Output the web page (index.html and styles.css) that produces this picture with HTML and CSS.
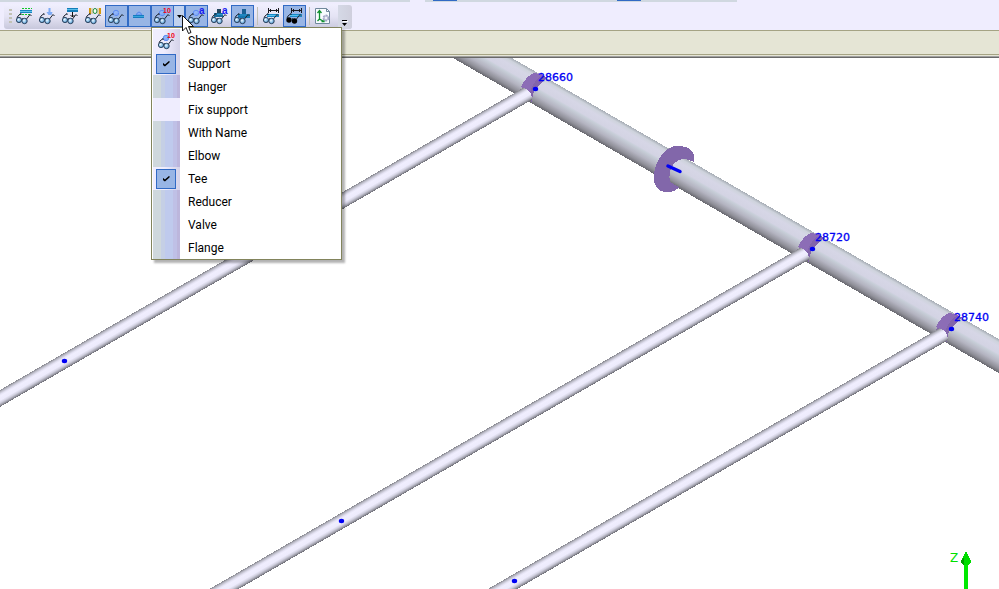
FILE: index.html
```html
<!DOCTYPE html>
<html lang="en">
<head>
<meta charset="utf-8">
<title>Piping model view</title>
<link rel="stylesheet" href="styles.css">
</head>
<body>
<svg class="defs" aria-hidden="true">
  <defs>
    <radialGradient id="lens" cx=".4" cy=".4" r=".7"><stop offset="0" stop-color="#f0faff"/><stop offset=".5" stop-color="#8fc4ec"/><stop offset="1" stop-color="#3f7cb0"/></radialGradient>
    <g id="arms">
      <path d="M1 10L2 8L5 5.500V7M6 11L7 10.500M10.500 11L14 6.500L15.500 8" fill="none" stroke="#1c2430"/>
    </g>
    <g id="glasses">
      <use href="#arms"/>
      <circle cx="3" cy="12" r="2.600" fill="url(#lens)" stroke="#2c4460"/>
      <circle cx="8.500" cy="13" r="2.700" fill="url(#lens)" stroke="#2c4460"/>
    </g>
    <g id="node">
      <circle cx="8" cy="5" r="2.700" fill="#8fb4f8" stroke="#5f8cf2"/>
      <path d="M6 8L11 4" stroke="#7ba4f8"/>
    </g>
    <g id="tee"><path d="M4 6h12v4H4z" fill="#1478b4"/><path d="M8 1h4v5H8z" fill="#1a5f94"/><path d="M4 7h11" stroke="#2c94cc"/></g>
    <g id="dimension"><path d="M5.500 0v5M15.500 0v5M6 2.500h9M7.500 1v3M13.500 1v3" stroke="#18181c" fill="none"/><path d="M4 6h12v3H4z" fill="#1688c8"/><path d="M4 7.500h12" stroke="#58c0ec"/></g>
  </defs>
</svg>

<header class="dock">
  <div class="upper" aria-hidden="true"><i class="edge first"></i><i class="edge second"><b></b><b></b></i></div>
  <div class="toolbar" role="toolbar" aria-label="View">
    <i class="grip"></i>
    <button class="tool" aria-label="Show insulation"><svg viewBox="0 0 16 16"><path d="M6 .5h10M3 6.500h11" stroke="#10c828" stroke-dasharray="2 1"/><path d="M4 2h12v3H4z" fill="#1585bd"/><path d="M4 3.500h12" stroke="#64c4ee"/><use href="#glasses"/></svg></button>
    <button class="tool" aria-label="Show loads"><svg viewBox="0 0 16 16"><path d="M9.500 0h2v4h2l-1 3h-3l-2-3h2z" fill="#7fabf5"/><use href="#glasses"/></svg></button>
    <button class="tool" aria-label="Show supports"><svg viewBox="0 0 16 16"><path d="M5 0h11v4H5z" fill="#137db8"/><path d="M5 1.500h11" stroke="#57bce9"/><path d="M10.500 4v5M8.500 7l2 2 2-2" stroke="#111" fill="none"/><use href="#glasses"/></svg></button>
    <button class="tool" aria-label="Show springs"><svg viewBox="0 0 16 16"><path d="M4 0h2v6H4zM14 0h2v6h-2z" fill="#d49a10"/><ellipse cx="10" cy="3" rx="2" ry="2.500" fill="#f5fff5" stroke="#148434"/><path d="M7 0v6M13 0v6" stroke="#c69a26" stroke-width=".6"/><use href="#glasses"/></svg></button>
    <button class="tool on" aria-pressed="true" aria-label="Show nodes"><svg viewBox="0 0 16 16"><use href="#node"/><use href="#glasses"/></svg></button>
    <button class="tool on" aria-pressed="true" aria-label="Show centre line"><svg viewBox="0 0 16 16"><path d="M5 7q3-6 6 0z" fill="#86aef5" stroke="#5687e8"/><path d="M2 7h11v3H2z" fill="#167cc0"/><path d="M2 8.500h11" stroke="#38a5dc"/></svg></button>
    <div class="split">
      <button class="tool on" aria-pressed="true" aria-label="Show node numbers"><svg viewBox="0 0 16 16"><use href="#node"/><use href="#glasses"/><text class="ten" x="9" y="5">10</text></svg></button>
      <button class="arrow" aria-expanded="true" aria-label="Node number options"><svg viewBox="0 0 5 3"><path d="M0 0h5L2.500 3z"/></svg></button>
      <div class="menu" role="group" aria-label="Node number options">
        <button class="item"><span class="mark"><svg viewBox="0 0 16 16"><use href="#node"/><use href="#glasses"/><text class="ten" x="9" y="5">10</text></svg></span><span>Show Node N<u>u</u>mbers</span></button>
        <label class="item"><span class="mark"><input type="checkbox" checked></span><span>Support</span></label>
        <label class="item"><span class="mark banded"><input type="checkbox"></span><span>Hanger</span></label>
        <label class="item"><span class="mark pale"><input type="checkbox"></span><span>Fix support</span></label>
        <label class="item"><span class="mark banded"><input type="checkbox"></span><span>With Name</span></label>
        <label class="item"><span class="mark banded"><input type="checkbox"></span><span>Elbow</span></label>
        <label class="item"><span class="mark"><input type="checkbox" checked></span><span>Tee</span></label>
        <label class="item"><span class="mark banded"><input type="checkbox"></span><span>Reducer</span></label>
        <label class="item"><span class="mark banded"><input type="checkbox"></span><span>Valve</span></label>
        <label class="item"><span class="mark banded"><input type="checkbox"></span><span>Flange</span></label>
      </div>
      <svg class="pointer" viewBox="0 0 12 20" aria-hidden="true"><path d="M.5 .5V16L4 12.500L6.500 18.500L9 17.500L6.500 11.500H11.500Z" fill="#fff" stroke="#111"/></svg>
    </div>
    <button class="tool on" aria-pressed="true" aria-label="Show node names"><svg viewBox="0 0 16 16"><use href="#node"/><use href="#glasses"/><text class="letter" x="11" y="6">a</text></svg></button>
    <button class="tool" aria-label="Show element names"><svg viewBox="0 0 16 16"><path d="M3 5h9v4H3z" fill="#176f9f"/><path d="M6 1h4v4H6z" fill="#24475f"/><path d="M3 6.500h9" stroke="#2c94cc"/><use href="#glasses"/><text class="letter" x="11" y="6">a</text></svg></button>
    <button class="tool on" aria-pressed="true" aria-label="Show elements"><svg viewBox="0 0 16 16"><use href="#tee"/><use href="#glasses"/></svg></button>
    <i class="rule"></i>
    <button class="tool" aria-label="Show dimensions"><svg viewBox="0 0 16 16"><use href="#dimension"/><use href="#glasses"/></svg></button>
    <button class="tool on" aria-pressed="true" aria-label="Show all dimensions"><svg viewBox="0 0 16 16"><use href="#dimension"/><use href="#arms"/><circle cx="3" cy="12" r="2.700"/><circle cx="8.500" cy="13" r="2.700"/></svg></button>
    <i class="rule"></i>
    <button class="tool" aria-label="View settings"><svg viewBox="0 0 16 16"><path d="M.5 .5h11l3 3v12H.5z" fill="#f8fcff" stroke="#70889c"/><path d="M11.500 .5v3h3" fill="none" stroke="#70889c"/><path d="M4.500 3v8L8 13M2.500 5l2-2.500 2 2.500M6.500 13.500H9V11M4.500 11L2.500 13" fill="none" stroke="#109030" stroke-width="1.300"/><circle cx="11" cy="10" r="2.700" fill="#c4c8de" stroke="#a2a6c4" stroke-width="1.500" stroke-dasharray="2 1"/><circle cx="11" cy="10" r="1" fill="#fff"/></svg></button>
    <button class="more" aria-label="Toolbar options"><svg viewBox="0 0 6 6"><path d="M1 1.500h5" stroke="#fff"/><path d="M0 0h5v1H0zM0 3h5L2.500 6z"/></svg></button>
  </div>
</header>
<div class="band"></div>

<main class="viewport">
  <svg class="model" viewBox="0 58 999 531" preserveAspectRatio="xMinYMin slice" role="img" aria-label="Pipe model">
    <defs>
      <linearGradient id="main-pipe" x1="0" y1="0" x2="0" y2="1">
        <stop offset="0" stop-color="#a6acb4"/><stop offset=".1" stop-color="#ced3dc"/><stop offset=".22" stop-color="#d6d6e6"/><stop offset=".44" stop-color="#d3d3e3"/><stop offset=".5" stop-color="#c7ced8"/><stop offset=".7" stop-color="#b4b4c1"/><stop offset=".88" stop-color="#909099"/><stop offset="1" stop-color="#696970"/>
      </linearGradient>
      <linearGradient id="branch-pipe" x1="0" y1="0" x2="0" y2="1">
        <stop offset="0" stop-color="#85858d"/><stop offset=".12" stop-color="#bcbcc8"/><stop offset=".26" stop-color="#e4e2f3"/><stop offset=".36" stop-color="#f0eefe"/><stop offset=".62" stop-color="#edebfc"/><stop offset=".76" stop-color="#d2d1e0"/><stop offset=".88" stop-color="#a6a6b2"/><stop offset="1" stop-color="#6c6c74"/>
      </linearGradient>
      <g id="collar">
        <path d="M-12 9Q-13 2-6-7Q1-15 10-10L14-9L5 0Q-1 6-1 17L-3 14Z" fill="#8265aa"/>
        <path d="M-12 1Q-7-10 1-13L11-11Q1-7-3 6Z" fill="#8c6db6"/>
      </g>
      <ellipse id="dot" rx="2.700" ry="2.200" fill="#0000f4"/>
    </defs>
    <g shape-rendering="crispEdges">
      <g transform="translate(482.500 58) rotate(30)"><rect x="-60" y="-14.700" width="720" height="29.400" fill="url(#main-pipe)"/></g>
      <use href="#collar" x="533" y="86"/><use href="#collar" x="810" y="246"/><use href="#collar" x="948" y="326"/>
      <g transform="translate(529 93) rotate(-30)"><path d="M-640-7.300H-2Q4 0-1 7.300H-640Z" fill="url(#branch-pipe)"/></g>
      <g transform="translate(806 253) rotate(-30)"><path d="M-720-7.300H-2Q4 0-1 7.300H-720Z" fill="url(#branch-pipe)"/></g>
      <g transform="translate(945 333.500) rotate(-30)"><path d="M-620-7.300H-2Q4 0-1 7.300H-620Z" fill="url(#branch-pipe)"/></g>
      <path d="M694 162Q696 151 686 147L677 145.500Q666 147 659 159Q653 169 654 181Q656 190 664 192H671Q677 190 679 187L670 182Q668 172 673 165Q679 158 686 159Z" fill="#8267aa"/>
      <path d="M964 562h4v27h-4z" fill="#00e800"/><path d="M966 551L971 561V563L968 565H964L961 563V561Z" fill="#00dc00"/><path d="M964 557L961 561V563L964 565Z" fill="#00a000"/>
    </g>
    <path d="M668 166L680 171.500" stroke="#0000f4" stroke-width="3.500" stroke-linecap="round"/>
    <use href="#dot" x="535.500" y="89"/><use href="#dot" x="812.500" y="249"/><use href="#dot" x="951.500" y="329"/>
    <use href="#dot" x="64.500" y="361"/><use href="#dot" x="341.500" y="521"/><use href="#dot" x="514.500" y="581"/>
    <g class="numbers"><text x="538" y="81">28660</text><text x="815" y="241">28720</text><text x="954" y="321">28740</text></g>
    <text class="axis" x="950" y="562">Z</text>
  </svg>
</main>
</body>
</html>
```
FILE: styles.css
```css
* { box-sizing: border-box; }

html, body { height: 100%; }

body {
  margin: 0;
  display: flex;
  flex-direction: column;
  overflow: hidden;
  background: #fff;
  color: #000;
  font: 12px/16px Roboto, "Open Sans", sans-serif;
}

button {
  margin: 0;
  padding: 0;
  border: 0;
  background: none;
  color: inherit;
  font: inherit;
}

svg { display: block; }

.defs { position: absolute; width: 0; height: 0; }

.dock {
  flex: none;
  background: #efedfe;
  border-bottom: 1px solid #a5a384;
}

.upper { display: flex; height: 2px; gap: 15px; }
.edge { background: #d0d8e0; }
.edge.first { width: 41%; }
.edge.second {
  width: 312px;
  display: flex;
  align-items: flex-start;
  gap: 160px;
  padding-left: 8px;
}
.edge b { width: 24px; height: 1px; background: #316ac5; }

.toolbar {
  display: flex;
  align-items: flex-start;
  width: max-content;
  height: 25px;
  margin: 2px 0 1px 4px;
  padding-top: 1px;
  border-radius: 3px;
  background: linear-gradient(#f0effe, #e4e3f4 50%, #c8c8dc);
}

.grip {
  width: 3px;
  height: 14px;
  margin: 4px 1px 0 5px;
  background: repeating-linear-gradient(#c2c2b4 0 2px, transparent 2px 4px);
}

.tool {
  display: flex;
  align-items: center;
  justify-content: center;
  width: 23px;
  height: 22px;
  padding-right: 1px;
}
.tool svg, .mark svg { width: 16px; height: 16px; overflow: visible; }
.on { background: #98b5e5; border: 1px solid #316ac5; }

.ten { fill: #f00018; font: bold 7px "Liberation Sans", sans-serif; }
.letter { fill: #1818f0; font: bold 10px "Liberation Sans", sans-serif; }

.rule {
  width: 1px;
  height: 18px;
  margin: 2px 2px 0 3px;
  background: #c2c2b8;
}

.split { position: relative; display: flex; }

.arrow {
  display: flex;
  align-items: center;
  justify-content: center;
  width: 11px;
  background: #c1d2ee;
  border: 1px solid #316ac5;
  border-left: 0;
}
.arrow svg { width: 5px; height: 3px; }

.more {
  display: flex;
  align-items: flex-end;
  justify-content: center;
  width: 14px;
  height: 24px;
  margin-left: 3px;
  padding-bottom: 3px;
  border-radius: 0 3px 3px 0;
  background: linear-gradient(90deg, #d5d9e6, #cfcfdd);
}
.more svg { width: 6px; height: 6px; }

.menu {
  position: absolute;
  z-index: 2;
  top: 22px;
  left: 0;
  width: 191px;
  padding: 1px 1px 0;
  background: #fff;
  border: 1px solid #82845c;
  box-shadow: 3px 3px 2px rgba(0, 0, 0, .3);
}

.item {
  display: flex;
  align-items: center;
  gap: 8px;
  width: 100%;
  height: 23px;
  text-align: left;
  white-space: nowrap;
}

.mark {
  display: flex;
  align-items: center;
  justify-content: center;
  width: 27px;
  height: 23px;
  padding-right: 1px;
  background: linear-gradient(90deg, #efedfe 40%, #d4d2e8);
}
.banded {
  background: linear-gradient(90deg, #cfd8dc 8px, #c5cfe5 8px 12px, #bfcaed 12px 20px, #bfc0e6 20px 24px, #bcb6dc 24px);
}
.pale { background: #efedfe; }

.mark input {
  appearance: none;
  width: 20px;
  height: 20px;
  margin: 0;
}
.mark input:checked {
  display: grid;
  place-items: center;
  background: #98b5e5;
  border: 1px solid #316ac5;
}
.mark input:checked::before {
  content: "";
  width: 7px;
  height: 6px;
  background: #000;
  clip-path: polygon(0 35%, 35% 68%, 100% 0, 100% 35%, 35% 100%, 0 70%);
}

.pointer {
  position: absolute;
  z-index: 3;
  top: 10px;
  left: 31px;
  width: 12px;
  height: 20px;
}

.band {
  flex: none;
  height: 27px;
  background: linear-gradient(#e5e5d5 23px, #a5a384 23px 24px, #e5e5d5 24px 25px, #a0a0a0 25px 26px, #696969 26px);
}

.viewport { flex: 1; min-height: 0; }
.model { width: 100%; height: 100%; }

.numbers {
  fill: #0000f4;
  stroke: #0000f4;
  stroke-width: .3px;
  font: 11px "DejaVu Sans", sans-serif;
}
.axis {
  fill: #00e000;
  font: 12px "DejaVu Sans", sans-serif;
}
```
